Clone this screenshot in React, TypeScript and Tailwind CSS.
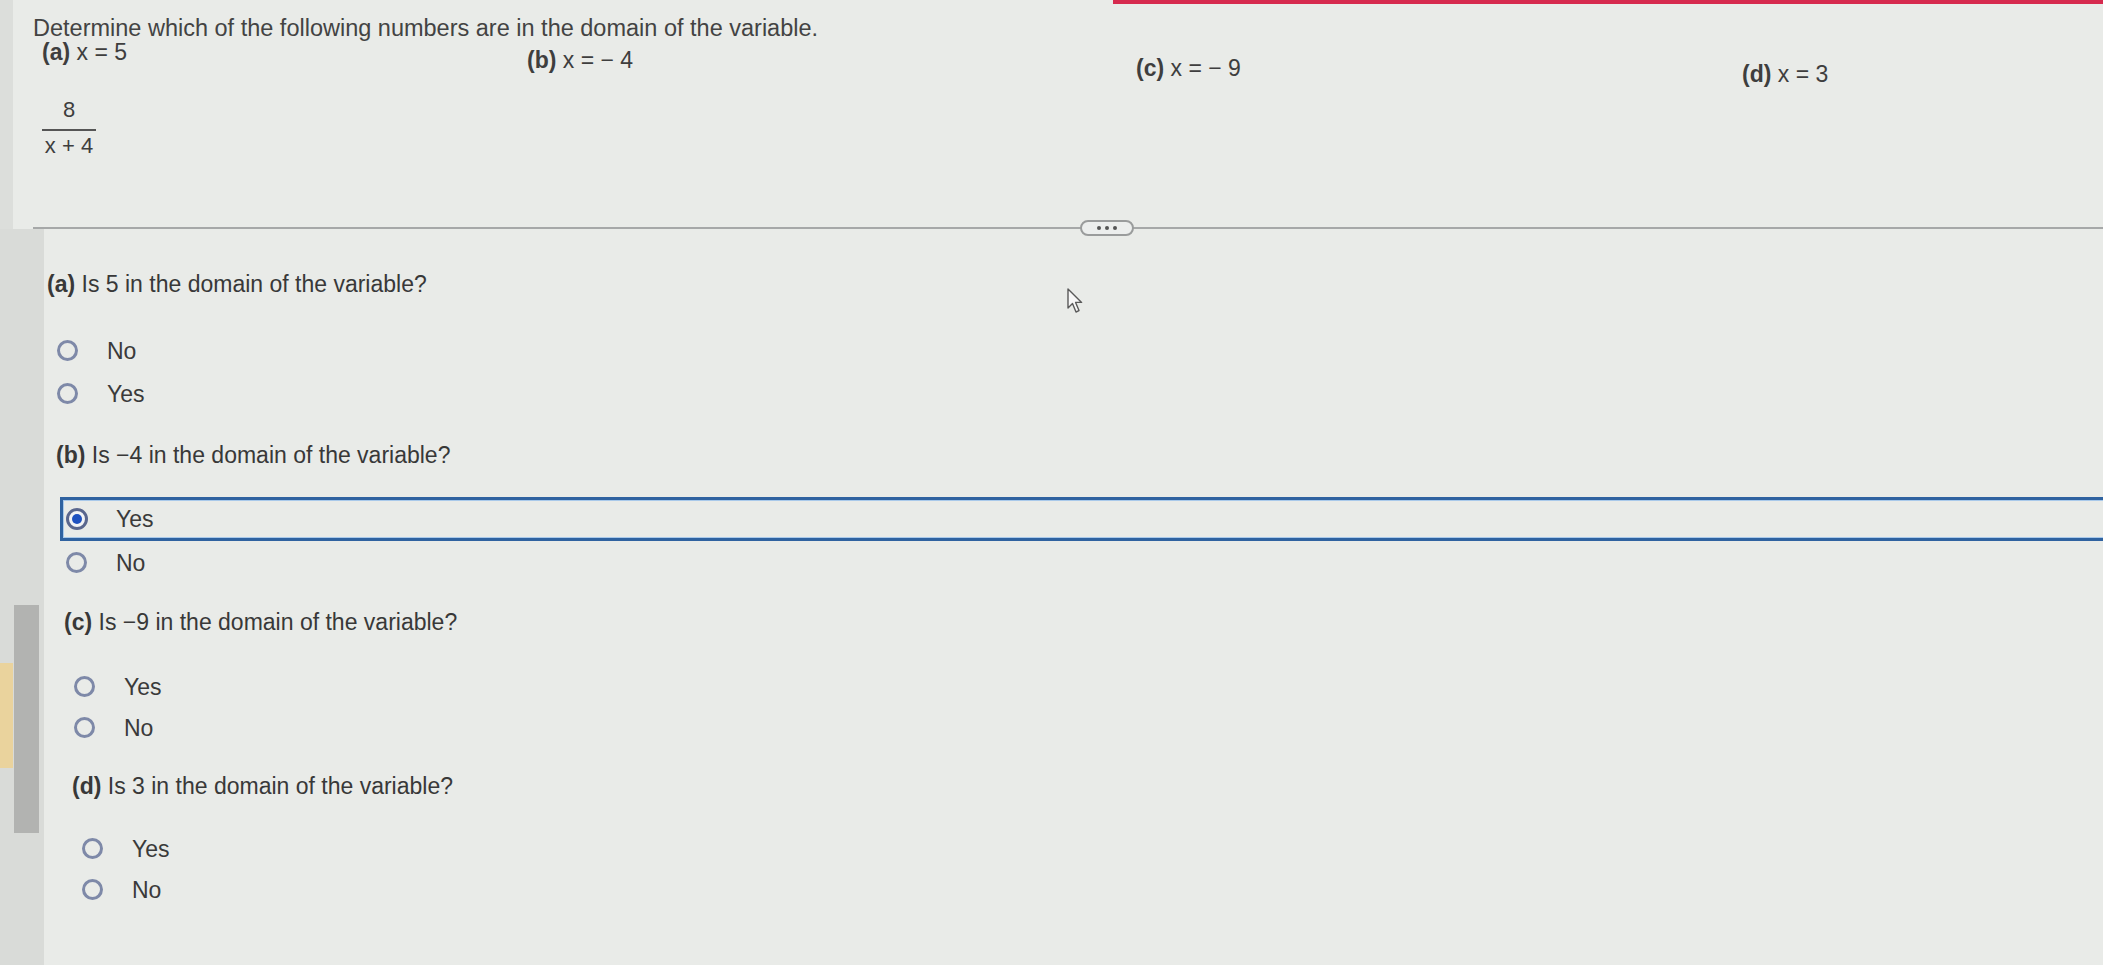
import React from "react";

function Radio({ checked = false }: { checked?: boolean }) {
  if (checked) {
    return (
      <span className="flex h-[22px] w-[22px] shrink-0 items-center justify-center rounded-full border-[3px] border-[#5a678e] bg-[#f3f4f6]">
        <span className="h-[10px] w-[10px] rounded-full bg-[#1f52c0]" />
      </span>
    );
  }
  return <span className="h-[21px] w-[21px] shrink-0 rounded-full border-[3px] border-[#7e89a8]" />;
}

function Option({ label, className = "" }: { label: string; className?: string }) {
  return (
    <div className={`flex h-[32px] items-center pl-[10px] ${className}`}>
      <Radio />
      <span className="ml-[29px] text-[23px] leading-[32px] text-[#3a3a3a]">{label}</span>
    </div>
  );
}

function Question({ tag, text, className = "" }: { tag: string; text: string; className?: string }) {
  return (
    <div className={`h-[28px] whitespace-nowrap text-[23px] leading-[28px] text-[#383838] ${className}`}>
      <span className="font-bold">({tag})</span> {text}
    </div>
  );
}

export default function App() {
  return (
    <div
      className="relative flex h-[965px] w-[2103px] flex-col overflow-hidden bg-[#e9ebe8]"
      style={{ fontFamily: '"Liberation Sans", Arial, sans-serif' }}
    >
      {/* top section */}
      <div className="flex">
        <div className="w-[13px] shrink-0 bg-[#dcdedb]" />
        <div className="flex min-w-0 flex-1 flex-col">
          <div className="ml-[1100px] h-[4px] bg-[#d62a4e]" />
          <div className="mt-[12px] h-[24px] whitespace-nowrap pl-[20px] text-[23.5px] leading-[24px] text-[#434343]">
            Determine which of the following numbers are in the domain of the variable.
          </div>
          <div className="grid grid-cols-[485px_609px_606px_auto] pl-[29px] text-[23px] leading-[24px] text-[#3e3e3e]">
            <div className="whitespace-nowrap">
              <span className="font-bold">(a)</span> x = 5
            </div>
            <div className="mt-[8px] whitespace-nowrap">
              <span className="font-bold">(b)</span> x = − 4
            </div>
            <div className="mt-[16px] whitespace-nowrap">
              <span className="font-bold">(c)</span> x = − 9
            </div>
            <div className="mt-[22px] whitespace-nowrap">
              <span className="font-bold">(d)</span> x = 3
            </div>
          </div>
          <div className="ml-[29px] mt-[12px] flex w-[54px] flex-col items-center text-[22px] text-[#3e3e3e]">
            <div className="pb-[7px] leading-[24px]">8</div>
            <div className="h-[1.5px] w-full bg-[#555555]" />
            <div className="whitespace-nowrap pt-[3px] leading-[24px]">x + 4</div>
          </div>
          <div className="relative ml-[20px] mt-[69px] h-[2px] bg-[#a6a8a8]">
            <div className="absolute left-[1047px] top-[-7px] flex h-[16px] w-[54px] items-center justify-center gap-[4px] rounded-full border-2 border-[#9a9c9c] bg-[#eceeed]">
              <span className="h-[4px] w-[4px] rounded-full bg-[#555555]" />
              <span className="h-[4px] w-[4px] rounded-full bg-[#555555]" />
              <span className="h-[4px] w-[4px] rounded-full bg-[#555555]" />
            </div>
          </div>
        </div>
      </div>

      {/* bottom section */}
      <div className="flex flex-1">
        <div className="flex w-[44px] shrink-0 bg-[#d9dbd8] pt-[376px]">
          <div className="mt-[58px] h-[105px] w-[13px] bg-[#ead39d]" />
          <div className="ml-[1px] h-[228px] w-[25px] bg-[#b2b3b1]" />
        </div>
        <div className="flex min-w-0 flex-1 flex-col">
          {/* (a) */}
          <div className="flex flex-col pl-[3px] pt-[41px]">
            <Question tag="a" text="Is 5 in the domain of the variable?" />
            <Option label="No" className="mt-[37px]" />
            <Option label="Yes" className="mt-[11px]" />
          </div>
          {/* (b) */}
          <div className="mt-[31px] flex flex-col pl-[12px]">
            <Question tag="b" text="Is  −4 in the domain of the variable?" />
            <div className="ml-[4px] mr-[-20px] mt-[28px] flex h-[44px] items-center border-[3px] border-[#2f62a0] pl-[3px] shadow-[inset_0_0_0_1px_#a9c9ea]">
              <Radio checked />
              <span className="ml-[28px] text-[23px] leading-[32px] text-[#3a3a3a]">Yes</span>
            </div>
            <Option label="No" className="mt-[6px]" />
          </div>
          {/* (c) */}
          <div className="mt-[29px] flex flex-col pl-[20px]">
            <Question tag="c" text="Is  −9 in the domain of the variable?" />
            <Option label="Yes" className="mt-[35px]" />
            <Option label="No" className="mt-[9px]" />
          </div>
          {/* (d) */}
          <div className="mt-[28px] flex flex-col pl-[28px]">
            <Question tag="d" text="Is 3 in the domain of the variable?" />
            <Option label="Yes" className="mt-[33px]" />
            <Option label="No" className="mt-[9px]" />
          </div>
        </div>
      </div>

      {/* mouse cursor */}
      <svg className="absolute left-[1066px] top-[287px]" width="20" height="28" viewBox="0 0 20 28">
        <path
          d="M2 2 L2 21 L6.5 16.5 L10 25 L13 23.6 L9.6 15.4 L15.6 15.4 Z"
          fill="#f7f7f7"
          stroke="#5a5a5a"
          strokeWidth="1.4"
          strokeLinejoin="round"
        />
      </svg>
    </div>
  );
}
